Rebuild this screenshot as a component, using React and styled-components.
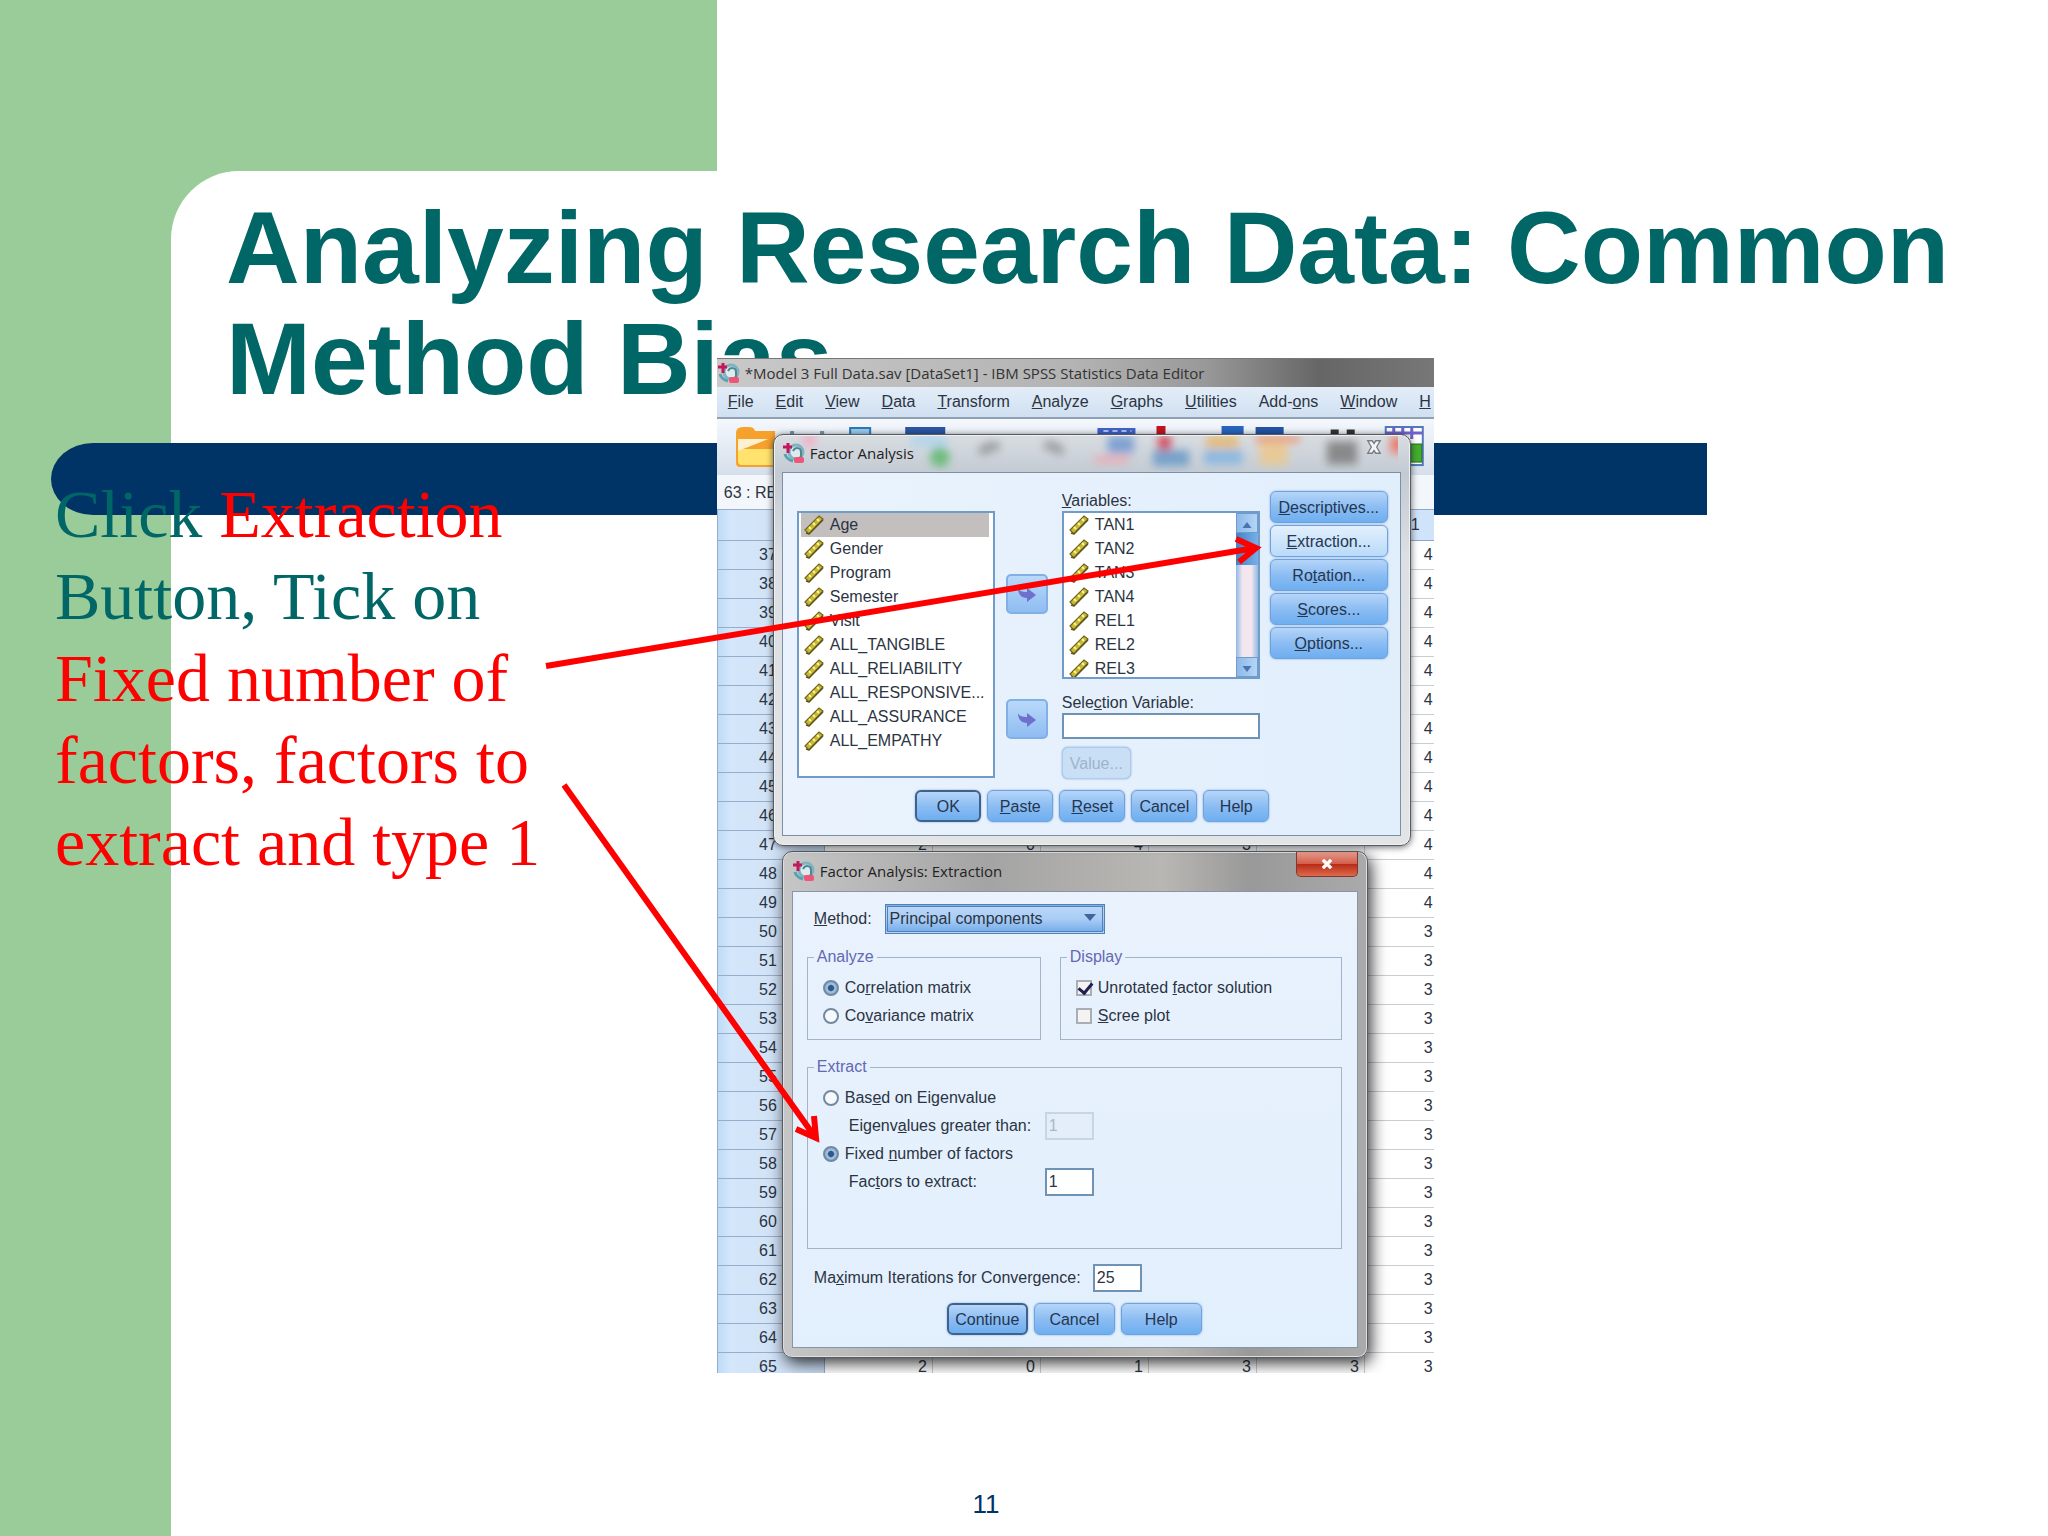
import React, { useState } from "react";
import styled, { createGlobalStyle } from "styled-components";

const GlobalStyle = createGlobalStyle`
  * {
    box-sizing: border-box;
  }

  body {
    margin: 0;
    background: #fff;
    font-family: "Liberation Sans", Arial, sans-serif;
  }

  button,
  input,
  select {
    font: inherit;
    color: inherit;
    margin: 0;
  }
`;

const menus = [
  "&File",
  "&Edit",
  "&View",
  "&Data",
  "&Transform",
  "&Analyze",
  "&Graphs",
  "&Utilities",
  "Add-&ons",
  "&Window",
  "&H",
];

const sourceItems = [
  "Age",
  "Gender",
  "Program",
  "Semester",
  "Visit",
  "ALL_TANGIBLE",
  "ALL_RELIABILITY",
  "ALL_RESPONSIVE...",
  "ALL_ASSURANCE",
  "ALL_EMPATHY",
];

const variableItems = ["TAN1", "TAN2", "TAN3", "TAN4", "REL1", "REL2", "REL3"];

const sideButtons = [
  "&Descriptives...",
  "&Extraction...",
  "Ro&tation...",
  "&Scores...",
  "&Options...",
];

const rows = Array.from({ length: 29 }, (_, i) => ({
  id: 37 + i,
  // only rows 47 and 65 show between the dialogs
  cells: i === 10 ? [2, 0, 4, 3, ""] : i === 28 ? [2, 0, 1, 3, 3] : ["", "", "", "", ""],
  last: i < 13 ? 4 : 3,
}));

// "&" marks the letter that is underlined
const Mnemonic = ({ text }) => {
  const at = text.indexOf("&");
  if (at < 0) return <>{text}</>;
  return (
    <span>
      {text.slice(0, at)}
      <u>{text[at + 1]}</u>
      {text.slice(at + 2)}
    </span>
  );
};

const SpssIcon = () => (
  <svg width="24" height="24" viewBox="0 0 24 24" aria-hidden="true">
    <circle cx="14" cy="11" r="7" fill="#dcebee" stroke="#7fb4bf" strokeWidth="3" />
    <path d="M11 10c2-4 8-4 8 1v6" fill="none" stroke="#4d8794" strokeWidth="2" />
    <path d="M6 2v10M1 6h9" stroke="#c2185b" strokeWidth="3" />
    <path d="M3 13c1 4 4 6 8 7" fill="none" stroke="#55a3b5" strokeWidth="3" />
    <rect x="12" y="16" width="10" height="6" rx="2" fill="#ee5576" />
  </svg>
);

const RulerIcon = () => (
  <svg width="20" height="20" viewBox="0 0 20 20" aria-hidden="true">
    <path d="M1 15 15 1l4 3L5 19z" fill="#c9b92c" stroke="#6d6420" strokeWidth="1.2" />
    <path d="m5 12 2 2m2-6 2 2m2-6 2 2" stroke="#fbf3a0" strokeWidth="2" />
    <path d="m2 18 3 1L19 5" fill="none" stroke="#5a5222" strokeWidth="1.4" />
  </svg>
);

const MoveIcon = () => (
  <svg width="20" height="18" viewBox="0 0 20 18" aria-hidden="true">
    <path d="M1 3c1 3 4 4 9 4V3l9 7-9 7v-4C4 13 1 9 1 3z" fill="#6d70cc" />
  </svg>
);

const ToolbarArt = () => (
  <svg width="100%" height="100%" viewBox="0 0 716 56" preserveAspectRatio="xMinYMin slice" aria-hidden="true">
    <path d="M19 14q0-6 7-6h6q5 0 6 4h20v32q0 4-4 4H23q-4 0-4-4z" fill="#f6a12c" />
    <path d="M21 30h40v12q0 4-4 4H25q-4 0-4-4z" fill="#ffe36e" />
    <path d="M21 20h30l-30 12z" fill="#fff0cf" />
    <rect x="133" y="9" width="20" height="14" fill="#9ccdf2" stroke="#2f78b5" strokeWidth="2" />
    <rect x="188" y="8" width="40" height="16" fill="#2c56a3" />
    <path d="M75 12v6M105 12v6" stroke="#8090b0" strokeWidth="4" />
    <rect x="380" y="9" width="38" height="12" fill="#4163c9" />
    <path d="M386 12h28" stroke="#b4c4f2" strokeWidth="2" strokeDasharray="5 4" />
    <rect x="439" y="7" width="9" height="16" fill="#c41420" />
    <rect x="504" y="7" width="22" height="14" fill="#2865bd" />
    <rect x="538" y="8" width="28" height="10" fill="#2454a6" />
    <path d="M613 13h8M629 13h8" stroke="#333" strokeWidth="5" />
    <rect x="668" y="8" width="37" height="38" fill="#fff" stroke="#5379bd" strokeWidth="2" />
    <path d="M668 14h37M676 8v12M685 8v12M694 8v12" stroke="#6e63cb" strokeWidth="3" />
    <rect x="693" y="25" width="11" height="18" fill="#43ad31" stroke="#24701b" />
  </svg>
);

// toolbar icons seen through the glass of the dialog's title bar
const GlassArt = () => (
  <GlassSvg viewBox="0 0 620 36" preserveAspectRatio="xMinYMin slice" aria-hidden="true">
    <defs>
      <filter id="frost" x="-20%" y="-20%" width="140%" height="140%">
        <feGaussianBlur stdDeviation="4" />
      </filter>
    </defs>
    <g filter="url(#frost)" opacity="0.8">
      <circle cx="34" cy="4" r="7" fill="#f7a4c0" />
      <rect x="135" y="0" width="36" height="10" fill="#a7d3ee" />
      <circle cx="164" cy="21" r="10" fill="#57b766" />
      <path d="M205 18q5-10 18-7" fill="none" stroke="#8b8f93" strokeWidth="9" />
      <path d="M268 10q14-2 16 8" fill="none" stroke="#8b8f93" strokeWidth="9" />
      <rect x="318" y="20" width="34" height="7" fill="#f2a2ae" />
      <rect x="331" y="0" width="26" height="17" fill="#6a93d0" />
      <rect x="381" y="0" width="13" height="17" fill="#d1283a" />
      <rect x="376" y="14" width="36" height="16" fill="#6296c6" />
      <rect x="429" y="0" width="32" height="12" fill="#e7b45d" />
      <rect x="427" y="14" width="38" height="14" fill="#7cb1e2" />
      <rect x="478" y="0" width="44" height="6" fill="#ef7e55" />
      <rect x="482" y="6" width="28" height="23" fill="#efc787" />
      <rect x="549" y="5" width="30" height="23" fill="#777" />
      <rect x="612" y="0" width="18" height="17" fill="#ef6754" />
    </g>
  </GlassSvg>
);

const DataGrid = () => (
  <Grid>
    <thead>
      <tr>
        <RowHead />
        {[1, 2, 3, 4, 5].map((n) => (
          <ColHead key={n} />
        ))}
        <ColHead>1</ColHead>
      </tr>
    </thead>
    <tbody>
      {rows.map((row) => (
        <tr key={row.id}>
          <RowHead scope="row">{row.id}</RowHead>
          {row.cells.map((value, i) => (
            <Cell key={i}>{value}</Cell>
          ))}
          <Cell $last>{row.last}</Cell>
        </tr>
      ))}
    </tbody>
  </Grid>
);

const VariableList = ({ items, label, selected, scroll }) => (
  <ListFrame $tall={!scroll}>
    <List aria-label={label}>
      {items.map((item) => (
        <ListItem key={item} $selected={item === selected}>
          <RulerIcon />
          {item}
        </ListItem>
      ))}
    </List>
    {scroll && (
      <ScrollTrack>
        <ScrollButton aria-label="Scroll up">
          <svg width="10" height="6" viewBox="0 0 12 8">
            <path d="M6 0l6 8H0z" fill="#4a74ab" />
          </svg>
        </ScrollButton>
        <ScrollThumb />
        <ScrollButton aria-label="Scroll down">
          <svg width="10" height="6" viewBox="0 0 12 8">
            <path d="M6 8l6-8H0z" fill="#4a74ab" />
          </svg>
        </ScrollButton>
      </ScrollTrack>
    )}
  </ListFrame>
);

const FactorDialog = () => (
  <FactorWindow aria-label="Factor Analysis">
    <GlassArt />
    <DialogTitle $height={36}>
      <SpssIcon />
      <DialogName>Factor Analysis</DialogName>
      <GhostClose aria-label="Close">
        <svg width="18" height="16" viewBox="0 0 20 18">
          <path
            d="M3 2h5l2 3 2-3h5l-4 7 4 7h-5l-2-3-2 3H3l4-7z"
            fill="#f4f5f7"
            stroke="#777c85"
            strokeWidth="1.5"
          />
        </svg>
      </GhostClose>
    </DialogTitle>
    <FactorPanel>
      <FactorBody>
        <VariableList items={sourceItems} label="Available variables" selected="Age" />
        <MoveColumn>
          <MoveButton aria-label="Move to variables">
            <MoveIcon />
          </MoveButton>
          <MoveButton aria-label="Move to selection variable">
            <MoveIcon />
          </MoveButton>
        </MoveColumn>
        <TargetColumn>
          <FieldLabel as="span">
            <Mnemonic text="&Variables:" />
          </FieldLabel>
          <VariableList items={variableItems} label="Variables" scroll />
          <SelectionLabel htmlFor="selection">
            <Mnemonic text="Sele&ction Variable:" />
          </SelectionLabel>
          <SelectionInput id="selection" />
          <ValueButton disabled>Value...</ValueButton>
        </TargetColumn>
        <SideColumn>
          {sideButtons.map((text) => (
            <Button key={text} $light={text === "&Extraction..."}>
              <Mnemonic text={text} />
            </Button>
          ))}
        </SideColumn>
      </FactorBody>
      <ButtonRow>
        {["OK", "&Paste", "&Reset", "Cancel", "Help"].map((text) => (
          <Button key={text} $width={66} $primary={text === "OK"}>
            <Mnemonic text={text} />
          </Button>
        ))}
      </ButtonRow>
    </FactorPanel>
  </FactorWindow>
);

const ExtractionDialog = () => {
  const [matrix, setMatrix] = useState("correlation");
  const [extract, setExtract] = useState("fixed");

  return (
    <ExtractionWindow aria-label="Factor Analysis: Extraction">
      <DialogTitle $height={38}>
        <SpssIcon />
        <DialogName>Factor Analysis: Extraction</DialogName>
        <CloseButton aria-label="Close">
          <svg width="12" height="10" viewBox="0 0 14 12">
            <path d="M2 1l10 10M12 1L2 11" stroke="#fff" strokeWidth="4" />
          </svg>
        </CloseButton>
      </DialogTitle>
      <ExtractionPanel>
        <MethodRow>
          <FieldLabel htmlFor="method">
            <Mnemonic text="&Method:" />
          </FieldLabel>
          <SelectWrap>
            <Select id="method">
              <option>Principal components</option>
            </Select>
            <SelectArrow width="12" height="8" viewBox="0 0 12 8" aria-hidden="true">
              <path d="M0 0h12L6 7z" fill="#43639a" />
            </SelectArrow>
          </SelectWrap>
        </MethodRow>
        <GroupRow>
          <Group $width={234}>
            <Legend>Analyze</Legend>
            <Option>
              <Radio
                name="matrix"
                checked={matrix === "correlation"}
                onChange={() => setMatrix("correlation")}
              />
              <Mnemonic text="Co&rrelation matrix" />
            </Option>
            <Option>
              <Radio
                name="matrix"
                checked={matrix === "covariance"}
                onChange={() => setMatrix("covariance")}
              />
              <Mnemonic text="Co&variance matrix" />
            </Option>
          </Group>
          <Group $width={282}>
            <Legend>Display</Legend>
            <Option>
              <Checkbox defaultChecked />
              <Mnemonic text="Unrotated &factor solution" />
            </Option>
            <Option>
              <Checkbox />
              <Mnemonic text="&Scree plot" />
            </Option>
          </Group>
        </GroupRow>
        <ExtractGroup>
          <Legend>Extract</Legend>
          <Option>
            <Radio
              name="extract"
              checked={extract === "eigen"}
              onChange={() => setExtract("eigen")}
            />
            <Mnemonic text="Bas&ed on Eigenvalue" />
          </Option>
          <SubField>
            <FieldLabel htmlFor="eigen">
              <Mnemonic text="Eigenv&alues greater than:" />
            </FieldLabel>
            <NumberInput id="eigen" defaultValue="1" disabled />
          </SubField>
          <Option>
            <Radio
              name="extract"
              checked={extract === "fixed"}
              onChange={() => setExtract("fixed")}
            />
            <Mnemonic text="Fixed &number of factors" />
          </Option>
          <SubField>
            <FieldLabel htmlFor="factors">
              <Mnemonic text="Fac&tors to extract:" />
            </FieldLabel>
            <NumberInput id="factors" defaultValue="1" />
          </SubField>
        </ExtractGroup>
        <IterationRow>
          <FieldLabel htmlFor="iterations">
            <Mnemonic text="Ma&ximum Iterations for Convergence:" />
          </FieldLabel>
          <NumberInput id="iterations" defaultValue="25" />
        </IterationRow>
        <ButtonRow>
          {["Continue", "Cancel", "Help"].map((text) => (
            <Button key={text} $width={81} $primary={text === "Continue"}>
              {text}
            </Button>
          ))}
        </ButtonRow>
      </ExtractionPanel>
    </ExtractionWindow>
  );
};

const App = () => {
  return (
    <Slide>
      <GlobalStyle />
      <GreenBlock />
      <Sheet />
      <BlueBar />
      <Title>
        Analyzing Research Data: Common
        <br />
        Method Bias
      </Title>
      <Instructions>
        Click <em>Extraction</em>
        <br />
        Button, Tick on
        <br />
        <em>
          Fixed number of
          <br />
          factors, factors to
          <br />
          extract and type 1
        </em>
      </Instructions>
      <Editor>
        <EditorTitle>
          <SpssIcon />
          *Model 3 Full Data.sav [DataSet1] - IBM SPSS Statistics Data Editor
        </EditorTitle>
        <MenuBar>
          {menus.map((menu) => (
            <MenuButton key={menu}>
              <Mnemonic text={menu} />
            </MenuButton>
          ))}
        </MenuBar>
        <Toolbar>
          <ToolbarArt />
        </Toolbar>
        <CellBar>63 : RE</CellBar>
        <DataGrid />
        <ExtractionDialog />
        <FactorDialog />
      </Editor>
      <PageNumber>11</PageNumber>
      <Arrows viewBox="0 0 2048 1536" preserveAspectRatio="xMinYMin meet" aria-hidden="true">
        <path d="M546 666 1255 548M1236 539l20 9-17 14" />
        <path d="M564 785 815 1137M814 1116l2 22-20-9" />
      </Arrows>
    </Slide>
  );
};

export default App;

const Slide = styled.main`
  position: relative;
  display: grid;
  grid-template-columns: 35% 35% 30%;
  grid-template-rows: 171px 187px 85px 72px 1fr auto;
  min-height: 100vh;
  overflow: hidden;
`;

const GreenBlock = styled.div`
  grid-area: 1 / 1 / -1 / 2;
  background: #99cc99;
`;

const Sheet = styled.div`
  grid-area: 2 / 1 / -1 / -1;
  margin-left: 171px;
  background: #fff;
  border-top-left-radius: 68px;
`;

const BlueBar = styled.div`
  grid-area: 4 / 1 / 5 / -1;
  margin: 0 341px 0 51px;
  background: #003366;
  border-radius: 42px 0 0 42px / 36px 0 0 36px;
`;

const Title = styled.h1`
  grid-area: 2 / 1 / 4 / -1;
  margin: 0;
  padding: 22px 0 0 226px;
  color: #006666;
  font-size: 102px;
  line-height: 111px;
  white-space: nowrap;
`;

const Instructions = styled.p`
  grid-area: 4 / 1 / 6 / 2;
  margin: 0;
  padding: 30px 0 0 55px;
  color: #006666;
  font-family: "Liberation Serif", "Times New Roman", serif;
  font-size: 68px;
  line-height: 82px;

  em {
    color: #ff0000;
    font-style: normal;
  }
`;

const PageNumber = styled.footer`
  grid-area: 6 / 1 / 7 / -1;
  padding: 0 76px 17px 0;
  color: #003366;
  font-size: 26px;
  line-height: 30px;
  text-align: center;
`;

const Arrows = styled.svg`
  position: absolute;
  inset: 0;
  width: 100%;
  pointer-events: none;

  path {
    fill: none;
    stroke: #ff0000;
    stroke-width: 6px;
    stroke-miterlimit: 10;
  }
`;

const Editor = styled.section`
  grid-area: 3 / 2 / 6 / 3;
  align-self: start;
  position: relative;
  height: 1015px;
  overflow: hidden;
  background: #fff;
  color: #2b3442;
  font-size: 16px;
  line-height: 20px;
  white-space: nowrap;
`;

const EditorTitle = styled.div`
  display: flex;
  align-items: center;
  gap: 4px;
  height: 29px;
  background: linear-gradient(90deg, #c9c9c9, #b3b3b3 50%, #999 68%, #666 84%, #777);
  border-top: 1px solid #777;
  color: #333;
  font-family: "Open Sans", sans-serif;
  font-size: 15px;
`;

const MenuBar = styled.nav`
  display: flex;
  gap: 22px;
  height: 32px;
  padding-left: 11px;
  background: linear-gradient(#e3edf8, #d0e0f1);
  border-bottom: 2px solid #8fa1b5;
`;

const MenuButton = styled.button`
  padding: 0;
  background: none;
  border: 0;
`;

const Toolbar = styled.div`
  height: 56px;
  overflow: hidden;
  background: linear-gradient(#f4f8fd, #d5dfeb);
`;

const CellBar = styled.div`
  height: 34px;
  padding: 8px 7px;
  background: #f3f6fa;
`;

const Grid = styled.table`
  width: 100%;
  table-layout: fixed;
  border-collapse: collapse;

  tr {
    height: 29px;
  }

  thead tr {
    height: 31px;
  }
`;

const RowHead = styled.th`
  width: 107px;
  padding: 0 47px 0 0;
  background: linear-gradient(90deg, #bcdaf8, #d3e6fa 12%, #d3e4f7 40%, #c8dbf2);
  border: 1px solid #98adc9;
  font-weight: normal;
  text-align: right;
`;

const ColHead = styled.th`
  width: 108px;
  padding: 0 14px 0 0;
  background: #cfe3fa;
  border: 1px solid #8fa6c4;
  font-weight: normal;
  text-align: right;

  &:last-child {
    width: 69px;
    border-right: 0;
  }
`;

const Cell = styled.td`
  padding: 0 ${(props) => (props.$last ? 1 : 5)}px 0 0;
  border: 1px solid #c9ced4;
  border-right-width: ${(props) => (props.$last ? 0 : 1)}px;
  text-align: right;
`;

const DialogBase = styled.section`
  position: absolute;
  display: flex;
  flex-direction: column;
  border: 1px solid #555b63;
  border-radius: 10px;
`;

const FactorWindow = styled(DialogBase)`
  top: 76px;
  left: 56px;
  width: 638px;
  padding: 0 9px 9px 8px;
  background: linear-gradient(#d9dde2, #c3cad2 38px, #dcdfe3 120px, #e2e4e6);
  box-shadow: 0 1px 7px rgba(0, 0, 0, 0.6), inset 0 0 0 1px #eef0f2;
`;

const ExtractionWindow = styled(DialogBase)`
  top: 493px;
  left: 65px;
  width: 586px;
  padding: 0 9px 9px;
  background: linear-gradient(90deg, #c6c6c6, #a4a4a4 35%, #b9b7b3 65%, #999 80%, #aaa);
  box-shadow: 3px 5px 16px rgba(0, 0, 0, 0.8), inset 0 0 0 1px #dedede;
`;

const GlassSvg = styled.svg`
  position: absolute;
  top: 1px;
  left: 1px;
  width: 98%;
  height: 35px;
`;

const DialogTitle = styled.header`
  position: relative;
  display: flex;
  align-items: center;
  gap: 4px;
  height: ${(props) => props.$height}px;
  margin-bottom: 1px;
  color: #222;
  font-family: "Open Sans", sans-serif;
  font-size: 15px;
`;

const DialogName = styled.span`
  flex: 1;
`;

const GhostClose = styled.button`
  align-self: flex-start;
  width: 54px;
  height: 26px;
  padding: 2px 0 0;
  background: none;
  border: 0;
`;

const CloseButton = styled.button`
  display: flex;
  align-items: center;
  justify-content: center;
  align-self: flex-start;
  width: 62px;
  height: 25px;
  background: linear-gradient(#e79a8c, #d2604c 48%, #b92c17 52%, #dd6b4c);
  border: 1px solid #7e3a32;
  border-top: 0;
  border-radius: 0 0 5px 5px;
`;

const FactorPanel = styled.div`
  padding: 18px 12px 13px 14px;
  background: linear-gradient(90deg, #eaf3fd, #e1eefc);
  border: 1px solid #7d8fa5;
`;

const ExtractionPanel = styled.div`
  padding: 12px 15px 12px 14px;
  background: linear-gradient(#e9f2fd, #e2effd);
  border: 1px solid #8a95a3;
`;

const FactorBody = styled.div`
  display: flex;
  align-items: flex-start;

  > div:first-child {
    margin-top: 20px;
  }
`;

const ListFrame = styled.div`
  display: flex;
  width: 198px;
  height: ${(props) => (props.$tall ? 267 : 168)}px;
  overflow: hidden;
  background: #fff;
  border: 2px solid #6f9cc8;
`;

const List = styled.ul`
  flex: 1;
  min-width: 0;
  margin: 0;
  padding: 0 4px 0 2px;
  list-style: none;
`;

const ListItem = styled.li`
  display: flex;
  align-items: center;
  gap: 6px;
  height: 24px;
  padding-left: 3px;
  background: ${(props) => (props.$selected ? "#c2bfbe" : "transparent")};
`;

const ScrollTrack = styled.div`
  display: flex;
  flex-direction: column;
  justify-content: space-between;
  width: 22px;
  background: linear-gradient(90deg, #8fb9e6, #f3e6ee 30%, #f3e6ee 70%, #8fb9e6);
`;

const ScrollButton = styled.button`
  height: 20px;
  padding: 0;
  line-height: 10px;
  background: linear-gradient(90deg, #8cb9ea, #b5d5f6);
  border: 1px solid #6f9cc8;
`;

const ScrollThumb = styled.div`
  height: 32px;
  margin-bottom: auto;
  background: linear-gradient(90deg, #4182c8, #79afe8);
`;

const MoveColumn = styled.div`
  display: flex;
  flex-direction: column;
  gap: 85px;
  margin: 83px 14px 0 11px;
`;

const MoveButton = styled.button`
  width: 42px;
  height: 40px;
  padding: 4px 0 0;
  background: linear-gradient(#b9d9fa, #8fbcf2);
  border: 2px solid #82b0e4;
  border-radius: 5px;
`;

const TargetColumn = styled.div`
  display: flex;
  flex-direction: column;
  align-items: flex-start;
  width: 198px;
`;

const FieldLabel = styled.label`
  line-height: 20px;
`;

const SelectionLabel = styled(FieldLabel)`
  margin-top: 14px;
`;

const TextInput = styled.input.attrs({ type: "text" })`
  background: #fff;
  border: 2px solid #6f93b5;
  border-radius: 0;
`;

const SelectionInput = styled(TextInput)`
  width: 100%;
  height: 26px;
`;

const SideColumn = styled.div`
  display: flex;
  flex: 1;
  flex-direction: column;
  gap: 2px;
  margin-left: 10px;
`;

const Button = styled.button`
  width: ${(props) => (props.$width ? `${props.$width}px` : "100%")};
  height: 32px;
  padding: 2px 0 0;
  background: ${(props) =>
    props.$light
      ? "linear-gradient(#e3f0fd, #b9daf9)"
      : "linear-gradient(#b5d5f8, #8cbdf3 50%, #6eaef0)"};
  border: ${(props) => (props.$primary ? "2px solid #40618c" : "1px solid #6fa2dc")};
  border-radius: 6px;
  box-shadow: 0 0 2px #6fa2dc;
  color: #25364f;
`;

const ValueButton = styled(Button)`
  width: 69px;
  margin-top: 8px;
  background: #c9dff5;
  border-color: #b0cbe6;
  color: #9fb4ca;
`;

const ButtonRow = styled.div`
  display: flex;
  justify-content: center;
  gap: 6px;
  margin-top: 11px;
`;

const MethodRow = styled.div`
  display: flex;
  align-items: center;
  gap: 13px;
  padding-left: 7px;
`;

const SelectWrap = styled.div`
  position: relative;
  width: 220px;
`;

const Select = styled.select`
  width: 100%;
  height: 30px;
  padding: 0 2px;
  appearance: none;
  background: linear-gradient(#b9d6f8, #a9cdf6 50%, #79aee9);
  border: 3px double #5481b5;
  border-radius: 0;
`;

const SelectArrow = styled.svg`
  position: absolute;
  top: 10px;
  right: 9px;
  pointer-events: none;
`;

const GroupRow = styled.div`
  display: flex;
  justify-content: space-between;
  margin-top: 13px;
`;

const Group = styled.fieldset`
  width: ${(props) => (props.$width ? `${props.$width}px` : "auto")};
  height: 93px;
  min-width: 0;
  margin: 0;
  padding: 7px 14px 0 15px;
  border: 1px solid #a3b3c8;
`;

const ExtractGroup = styled(Group)`
  height: 192px;
  margin-top: 17px;
`;

const Legend = styled.legend`
  margin-left: -9px;
  padding: 0 3px;
  color: #6268b4;
`;

const Option = styled.label`
  display: flex;
  align-items: center;
  gap: 6px;
  height: 28px;
`;

const Radio = styled.input.attrs({ type: "radio" })`
  width: 16px;
  height: 16px;
  appearance: none;
  background: #f5f8fc;
  border: 2px solid #74899f;
  border-radius: 50%;

  &:checked {
    background: radial-gradient(#31588a 30%, #a5c4e4 45%, #7197c0);
  }
`;

const Checkbox = styled.input.attrs({ type: "checkbox" })`
  width: 16px;
  height: 16px;
  appearance: none;
  background: #f4f3f1;
  border: 2px solid #a9adb5;

  &:checked::after {
    content: "";
    display: block;
    width: 6px;
    height: 11px;
    margin: -2px 0 0 3px;
    border: solid #1e1e50;
    border-width: 0 3px 3px 0;
    transform: rotate(40deg);
  }
`;

const SubField = styled.div`
  display: flex;
  align-items: center;
  justify-content: space-between;
  width: 245px;
  height: 28px;
  margin-left: 26px;
`;

const NumberInput = styled(TextInput)`
  width: 49px;
  height: 28px;
  padding: 0 2px;

  &:disabled {
    background: #e3eefa;
    border-color: #c8d6e4;
    color: #a9b8c8;
  }
`;

const IterationRow = styled.div`
  display: flex;
  align-items: center;
  justify-content: space-between;
  width: 335px;
  margin-top: 15px;
  padding-left: 7px;
`;
